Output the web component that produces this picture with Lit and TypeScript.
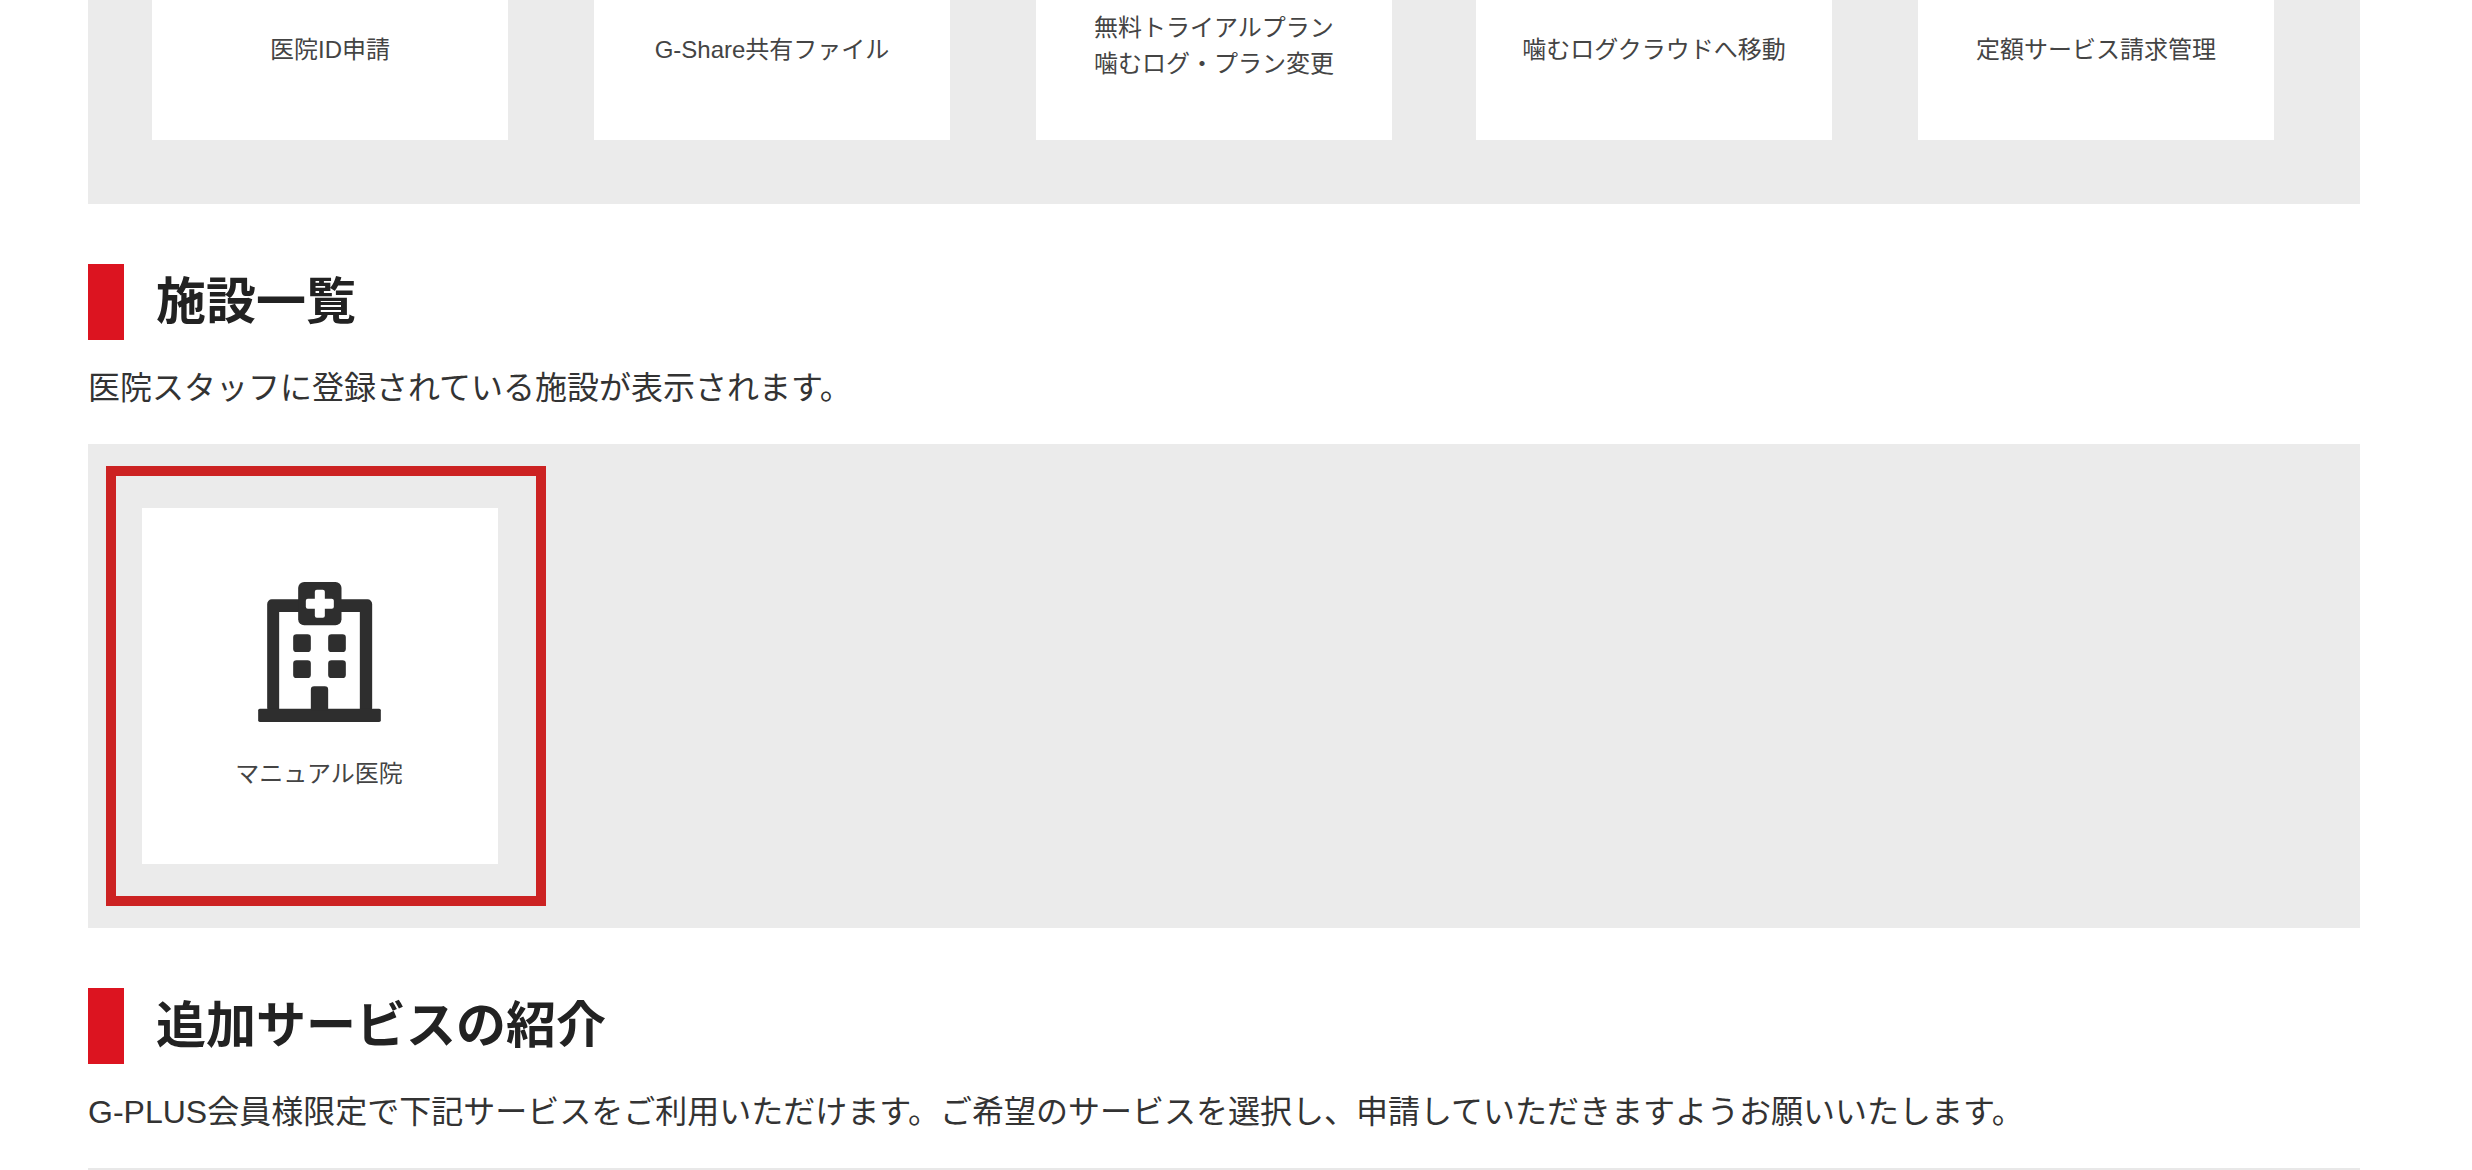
import { LitElement, html, css, svg } from 'lit';
import { customElement } from 'lit/decorators.js';

const topCards: string[][] = [
  ['医院ID申請'],
  ['G-Share共有ファイル'],
  ['無料トライアルプラン', '噛むログ・プラン変更'],
  ['噛むログクラウドへ移動'],
  ['定額サービス請求管理'],
];

// hospital building, drawn in zoomed-crop coordinates of the reference
const hospitalIcon = svg`
  <svg class="icon" viewBox="145 65 368 420" width="123" height="140" aria-hidden="true">
    <rect x="172" y="117" width="315" height="340" rx="14" fill="#2e2e2e" />
    <rect x="208" y="155" width="242" height="292" fill="#fff" />
    <rect x="145" y="445" width="368" height="40" rx="5" fill="#2e2e2e" />
    <rect x="265" y="65" width="130" height="130" rx="18" fill="#2e2e2e" />
    <rect x="315" y="88" width="30" height="84" rx="6" fill="#fff" />
    <rect x="288" y="115" width="84" height="30" rx="6" fill="#fff" />
    <rect x="250" y="222" width="53" height="53" rx="10" fill="#2e2e2e" />
    <rect x="355" y="222" width="53" height="53" rx="10" fill="#2e2e2e" />
    <rect x="250" y="300" width="53" height="53" rx="10" fill="#2e2e2e" />
    <rect x="355" y="300" width="53" height="53" rx="10" fill="#2e2e2e" />
    <path d="M303 450V388a10 10 0 0 1 10-10h32a10 10 0 0 1 10 10v62z" fill="#2e2e2e" />
  </svg>
`;

@customElement('app-root')
export class AppRoot extends LitElement {
  static styles = css`
    :host {
      display: block;
      height: 1170px;
      overflow: hidden;
      background: #fff;
      font-family: 'Liberation Sans', 'Noto Sans CJK JP', sans-serif;
      color: #333;
    }
    .page {
      margin: 0 112px 0 88px;
    }
    .panel {
      background: #ebebeb;
    }
    .top-panel {
      display: flex;
      gap: 86px;
      padding: 0 0 64px 64px;
    }
    .top-card {
      flex: none;
      width: 356px;
      height: 140px;
      padding-bottom: 40px;
      box-sizing: border-box;
      background: #fff;
      display: flex;
      flex-direction: column;
      align-items: center;
      justify-content: center;
      font-size: 24px;
      line-height: 36px;
      color: #444;
      text-align: center;
    }
    .top-card.two-lines {
      padding-bottom: 49px;
    }
    .top-card:nth-child(4) {
      margin-left: -2px;
    }
    .heading {
      display: flex;
      align-items: center;
      gap: 32px;
      height: 76px;
      margin: 60px 0 0;
      font-size: 50px;
      font-weight: 700;
      color: #222;
      line-height: 76px;
    }
    .heading::before {
      content: '';
      width: 36px;
      height: 76px;
      background: #dc1420;
    }
    .lead {
      margin: 0;
      font-size: 32px;
      line-height: 48px;
    }
    .facility-lead {
      margin: 24px 0 32px;
    }
    .services-lead {
      margin: 24px 0 32px;
    }
    .facility-panel {
      padding: 64px 54px;
      height: 484px;
      box-sizing: border-box;
    }
    .facility-card {
      position: relative;
      width: 356px;
      height: 356px;
      background: #fff;
      display: flex;
      flex-direction: column;
      align-items: center;
      font-size: 24px;
      line-height: 36px;
      color: #444;
    }
    .icon {
      display: block;
      margin: 74px 0 0 -2px;
    }
    .facility-card span {
      margin: 34px 0 0 -2px;
    }
    /* annotation frame over the screenshot */
    .frame {
      position: absolute;
      left: -36px;
      top: -42px;
      width: 440px;
      height: 440px;
      box-sizing: border-box;
      border: 10px solid #cc2222;
      pointer-events: none;
    }
    hr {
      border: 0;
      height: 2px;
      margin: 0;
      background: #e8e8e8;
    }
  `;

  render() {
    return html`
      <div class="page">
        <div class="panel top-panel">
          ${topCards.map(
            (lines) =>
              html`<div class="top-card ${lines.length > 1 ? 'two-lines' : ''}">
                ${lines.map((l) => html`<div>${l}</div>`)}
              </div>`,
          )}
        </div>

        <h2 class="heading"><span>施設一覧</span></h2>
        <p class="lead facility-lead">医院スタッフに登録されている施設が表示されます。</p>
        <div class="panel facility-panel">
          <div class="facility-card">
            ${hospitalIcon}
            <span>マニュアル医院</span>
            <div class="frame"></div>
          </div>
        </div>

        <h2 class="heading"><span>追加サービスの紹介</span></h2>
        <p class="lead services-lead">
          G-PLUS会員様限定で下記サービスをご利用いただけます。ご希望のサービスを選択し、申請していただきますようお願いいたします。
        </p>
        <hr />
      </div>
    `;
  }
}

declare global {
  interface HTMLElementTagNameMap {
    'app-root': AppRoot;
  }
}
